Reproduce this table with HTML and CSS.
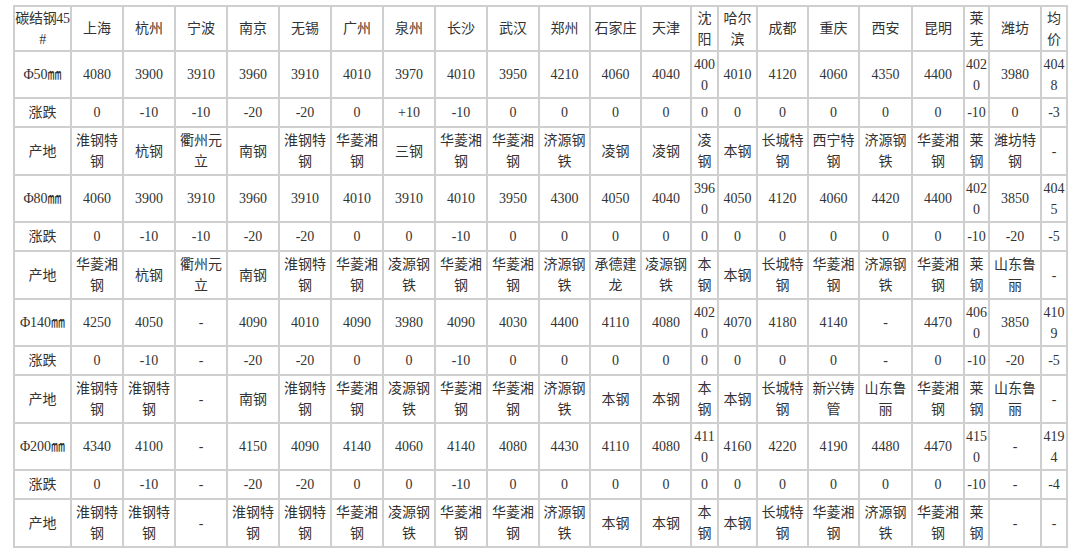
FILE: index.html
```html
<!DOCTYPE html>
<html lang="zh">
<head>
<meta charset="utf-8">
<title>碳结钢45#</title>
<link rel="stylesheet" href="styles.css">
</head>
<body>
<table class="price-table">
<colgroup>
<col class="w57"><col class="w52"><col class="w52"><col class="w52"><col class="w52"><col class="w52"><col class="w52"><col class="w52"><col class="w52"><col class="w52"><col class="w51"><col class="w51"><col class="w50"><col class="w27"><col class="w39"><col class="w51"><col class="w51"><col class="w53"><col class="w52"><col class="w25"><col class="w52"><col class="w26">
</colgroup>
<tbody>
<tr class="hdr"><td class="corner">碳结钢45#</td><td>上海</td><td>杭州</td><td>宁波</td><td>南京</td><td>无锡</td><td>广州</td><td>泉州</td><td>长沙</td><td>武汉</td><td>郑州</td><td>石家庄</td><td>天津</td><td>沈阳</td><td>哈尔滨</td><td>成都</td><td>重庆</td><td>西安</td><td>昆明</td><td>莱芜</td><td>潍坊</td><td>均价</td></tr>
<tr class="price"><td>Φ50㎜</td><td>4080</td><td>3900</td><td>3910</td><td>3960</td><td>3910</td><td>4010</td><td>3970</td><td>4010</td><td>3950</td><td>4210</td><td>4060</td><td>4040</td><td>4000</td><td>4010</td><td>4120</td><td>4060</td><td>4350</td><td>4400</td><td>4020</td><td>3980</td><td>4048</td></tr>
<tr class="chg"><td>涨跌</td><td>0</td><td>-10</td><td>-10</td><td>-20</td><td>-20</td><td>0</td><td>+10</td><td>-10</td><td>0</td><td>0</td><td>0</td><td>0</td><td>0</td><td>0</td><td>0</td><td>0</td><td>0</td><td>0</td><td>-10</td><td>0</td><td>-3</td></tr>
<tr class="orig"><td>产地</td><td>淮钢特钢</td><td>杭钢</td><td>衢州元立</td><td>南钢</td><td>淮钢特钢</td><td>华菱湘钢</td><td>三钢</td><td>华菱湘钢</td><td>华菱湘钢</td><td>济源钢铁</td><td>凌钢</td><td>凌钢</td><td>凌钢</td><td>本钢</td><td>长城特钢</td><td>西宁特钢</td><td>济源钢铁</td><td>华菱湘钢</td><td>莱钢</td><td>潍坊特钢</td><td>-</td></tr>
<tr class="price"><td>Φ80㎜</td><td>4060</td><td>3900</td><td>3910</td><td>3960</td><td>3910</td><td>4010</td><td>3910</td><td>4010</td><td>3950</td><td>4300</td><td>4050</td><td>4040</td><td>3960</td><td>4050</td><td>4120</td><td>4060</td><td>4420</td><td>4400</td><td>4020</td><td>3850</td><td>4045</td></tr>
<tr class="chg"><td>涨跌</td><td>0</td><td>-10</td><td>-10</td><td>-20</td><td>-20</td><td>0</td><td>0</td><td>-10</td><td>0</td><td>0</td><td>0</td><td>0</td><td>0</td><td>0</td><td>0</td><td>0</td><td>0</td><td>0</td><td>-10</td><td>-20</td><td>-5</td></tr>
<tr class="orig"><td>产地</td><td>华菱湘钢</td><td>杭钢</td><td>衢州元立</td><td>南钢</td><td>淮钢特钢</td><td>华菱湘钢</td><td>凌源钢铁</td><td>华菱湘钢</td><td>华菱湘钢</td><td>济源钢铁</td><td>承德建龙</td><td>凌源钢铁</td><td>本钢</td><td>本钢</td><td>长城特钢</td><td>华菱湘钢</td><td>济源钢铁</td><td>华菱湘钢</td><td>莱钢</td><td>山东鲁丽</td><td>-</td></tr>
<tr class="price"><td>Φ140㎜</td><td>4250</td><td>4050</td><td>-</td><td>4090</td><td>4010</td><td>4090</td><td>3980</td><td>4090</td><td>4030</td><td>4400</td><td>4110</td><td>4080</td><td>4020</td><td>4070</td><td>4180</td><td>4140</td><td>-</td><td>4470</td><td>4060</td><td>3850</td><td>4109</td></tr>
<tr class="chg"><td>涨跌</td><td>0</td><td>-10</td><td>-</td><td>-20</td><td>-20</td><td>0</td><td>0</td><td>-10</td><td>0</td><td>0</td><td>0</td><td>0</td><td>0</td><td>0</td><td>0</td><td>0</td><td>-</td><td>0</td><td>-10</td><td>-20</td><td>-5</td></tr>
<tr class="orig"><td>产地</td><td>淮钢特钢</td><td>淮钢特钢</td><td>-</td><td>南钢</td><td>淮钢特钢</td><td>华菱湘钢</td><td>凌源钢铁</td><td>华菱湘钢</td><td>华菱湘钢</td><td>济源钢铁</td><td>本钢</td><td>本钢</td><td>本钢</td><td>本钢</td><td>长城特钢</td><td>新兴铸管</td><td>山东鲁丽</td><td>华菱湘钢</td><td>莱钢</td><td>山东鲁丽</td><td>-</td></tr>
<tr class="price"><td>Φ200㎜</td><td>4340</td><td>4100</td><td>-</td><td>4150</td><td>4090</td><td>4140</td><td>4060</td><td>4140</td><td>4080</td><td>4430</td><td>4110</td><td>4080</td><td>4110</td><td>4160</td><td>4220</td><td>4190</td><td>4480</td><td>4470</td><td>4150</td><td>-</td><td>4194</td></tr>
<tr class="chg"><td>涨跌</td><td>0</td><td>-10</td><td>-</td><td>-20</td><td>-20</td><td>0</td><td>0</td><td>-10</td><td>0</td><td>0</td><td>0</td><td>0</td><td>0</td><td>0</td><td>0</td><td>0</td><td>0</td><td>0</td><td>-10</td><td>-</td><td>-4</td></tr>
<tr class="orig"><td>产地</td><td>淮钢特钢</td><td>淮钢特钢</td><td>-</td><td>淮钢特钢</td><td>淮钢特钢</td><td>华菱湘钢</td><td>凌源钢铁</td><td>华菱湘钢</td><td>华菱湘钢</td><td>济源钢铁</td><td>本钢</td><td>本钢</td><td>本钢</td><td>本钢</td><td>长城特钢</td><td>华菱湘钢</td><td>济源钢铁</td><td>华菱湘钢</td><td>莱钢</td><td>-</td><td>-</td></tr>
</tbody>
</table>
</body>
</html>
```
FILE: styles.css
```css
html, body {
  margin: 0;
  background: #fff;
}
body {
  padding: 5px 0 0 13px;
  font-family: "Liberation Serif", "Noto Sans CJK SC", serif;
  font-size: 14px;
  color: #333;
}
.price-table {
  border-collapse: collapse;
  table-layout: fixed;
  width: 1053px;
}
.price-table td {
  border: 2px solid #cfcfcf;
  text-align: center;
  vertical-align: middle;
  padding: 0;
  line-height: 21px;
  word-break: break-all;
}
.price-table td.corner { letter-spacing: -0.3px; }
.hdr td { height: 43px; }
.price td { height: 45px; }
.chg td { height: 27px; }
.orig td { height: 46px; }

.w57 { width: 57px; }
.w53 { width: 53px; }
.w52 { width: 52px; }
.w51 { width: 51px; }
.w50 { width: 50px; }
.w39 { width: 39px; }
.w27 { width: 27px; }
.w26 { width: 26px; }
.w25 { width: 25px; }
```
